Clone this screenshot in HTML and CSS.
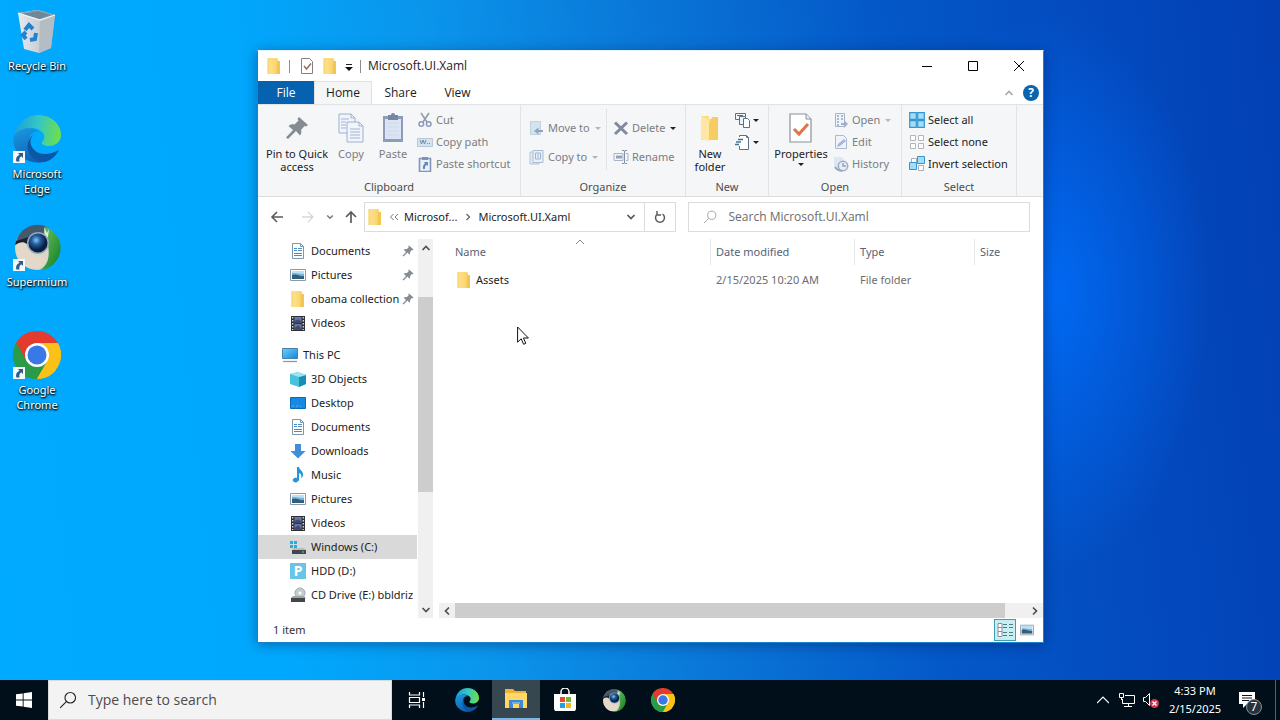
FILE: index.html
```html
<!DOCTYPE html>
<html lang="en">
<head>
<meta charset="utf-8">
<title>Microsoft.UI.Xaml</title>
<link rel="stylesheet" href="styles.css">
</head>
<body>
<svg class="sprite" aria-hidden="true">
  <defs>
    <linearGradient id="gFolder" x1="0" x2="1"><stop offset="0" stop-color="#ffe391"/><stop offset="1" stop-color="#f8cf62"/></linearGradient>
    <linearGradient id="gEdgeTop" x1="0" y1=".4" x2="1" y2=".5"><stop offset="0" stop-color="#1a9fdc"/><stop offset=".5" stop-color="#35c6c4"/><stop offset="1" stop-color="#6fe04a"/></linearGradient>
    <linearGradient id="gEdgeLeft" x1="0" y1="0" x2=".4" y2="1"><stop offset="0" stop-color="#1b9be0"/><stop offset="1" stop-color="#0f62b8"/></linearGradient>
    <radialGradient id="gOrb" cx=".4" cy=".35"><stop offset="0" stop-color="#8cc6ec"/><stop offset=".45" stop-color="#2560a4"/><stop offset="1" stop-color="#0a1f44"/></radialGradient>
    <linearGradient id="gGreen" x1="0" y1="0" x2="1" y2="1"><stop offset="0" stop-color="#6cc860"/><stop offset="1" stop-color="#127a24"/></linearGradient>
    <linearGradient id="gBin" x1="0" x2="1"><stop offset="0" stop-color="#e6ebef"/><stop offset=".55" stop-color="#c9d0d6"/><stop offset="1" stop-color="#a9b3bc"/></linearGradient>
    <linearGradient id="gScreen" x1="0" y1="0" x2="1" y2="1"><stop offset="0" stop-color="#6fd0fb"/><stop offset="1" stop-color="#1485dc"/></linearGradient>
  </defs>
  <symbol id="folder" viewBox="0 0 16 16"><path d="M1.500 0h9.500l1 1v2h2v13H1.500z" fill="url(#gFolder)"/><path d="M11 3h3v13h-3.500z" fill="#f3c551"/><path d="M1.500 0h2v16h-2z" fill="#f9d878"/></symbol>
  <symbol id="edge" viewBox="0 0 48 48">
    <path d="M1 22C3 9 13 0 25 0c13 0 23 9 23 20 0 7-6 11-12 11-5 0-8-2-7-4 3-3 3-7 0-10C21 10 8 12 1 22z" fill="url(#gEdgeTop)"/>
    <path d="M1 21c6-9 19-10 25-4-6-2-11 4-10 12 1 9 9 16 18 17-7 3-18 2-25-4C2 36-1 29 1 21z" fill="url(#gEdgeLeft)"/>
    <path d="M20 20c-6 6-1 19 12 19 5 0 9-2 12-3 2-1 2 0 1 1-3 5-8 9-14 10-11 0-18-10-16-19 1-4 3-7 5-8z" fill="#0c57a5"/>
  </symbol>
  <symbol id="chrome" viewBox="0 0 48 48">
    <path d="M24 24 3.200 12A24 24 0 0 1 44.800 12z" fill="#e33b2e"/>
    <path d="M24 24 44.800 12A24 24 0 0 1 24 48z" fill="#fbc116"/>
    <path d="M24 24v24A24 24 0 0 1 3.200 12z" fill="#2a9c48"/>
    <path d="M24 12h20.800c2 4 3.200 8 3.200 12L34.400 30z" fill="#fbc116"/>
    <path d="M34.400 30 24 48c-5 0-9-1-12-3l9-12z" fill="#2a9c48"/>
    <path d="M34.400 30 24 48c8 0 15-4 19-9z" fill="#fbc116"/>
    <path d="M13.600 30 3.200 12C6 7 10 4 14 2l6 12z" fill="#e33b2e"/>
    <path d="M3.200 12L13.600 30l6 3 1 8-10 3C2 38-3 24 3.200 12z" fill="#2a9c48"/>
    <circle cx="24" cy="24" r="12" fill="#fff"/><circle cx="24" cy="24" r="9.500" fill="#3b78e7"/>
  </symbol>
  <symbol id="supermium" viewBox="0 0 48 48">
    <circle cx="24" cy="25" r="22" fill="#dcd6c6"/>
    <path d="M3 19A22 22 0 0 1 34 4l-4 9-15 4z" fill="#46586c"/>
    <path d="M32 4a22 22 0 0 1-5 43c8-5 10-13 8-25l-5-8z" fill="url(#gGreen)"/>
    <path d="M3 18l16-5-5 8c-4-3-7-2-12 1z" fill="#162430"/>
    <path d="M4 21c6-2 9 0 12 6 5 8 12 6 17 10-3 6-7 9-13 9C11 45 2 36 4 21z" fill="#e3d8c9"/>
    <path d="M31 4l3 6 2-4-1 8-3 2z" fill="#e8e4e4"/>
    <circle cx="25" cy="20" r="11" fill="#8fa9bd"/><circle cx="25" cy="20" r="9.500" fill="url(#gOrb)"/>
  </symbol>
  <symbol id="bin" viewBox="0 0 48 48">
    <path d="M5 6 25 3l17 5-4 33-12 5-15-4z" fill="url(#gBin)"/>
    <path d="M5 6 25 3l17 5-15 5z" fill="#8ba4b6"/><path d="M9 7l16-3 13 4-12 4z" fill="#6f8798"/>
    <path d="M27 13 42 8l-4 33-12 5z" fill="#b4bcc4"/>
    <path d="M5 6l22 7 15-5" fill="none" stroke="#f2f6f8" stroke-width="1.300"/>
    <g fill="none" stroke="#2381cf" stroke-width="4"><path d="M12 23l4-5 4 4"/><path d="M23 26l-1 6-5 1"/><path d="M13 32l-3-4 3-3"/></g>
  </symbol>
  <symbol id="shortcut" viewBox="0 0 12 12"><path fill="#f4f8fb" d="M0 0h12v12H0z"/><path d="M5 2h5v5L8.300 5.300C6.500 6.500 6 8 6.500 10.500H3.300C2.500 7.500 3.500 5 6.500 3.700z" fill="#2e5c8a"/></symbol>
  <symbol id="checkpage" viewBox="0 0 26 32"><path d="M2 2h16l5 5v23H2z" fill="#fff" stroke="#8a929c" stroke-width="1.200"/><path d="M18 2v5h5" fill="#eee" stroke="#8a929c"/><path d="M6 17l5 5 9-10" fill="none" stroke="#e27248" stroke-width="3"/></symbol>
  <symbol id="pagetick" viewBox="0 0 16 16"><path d="M2.500.5h8l3 3v12h-11z" fill="#fff" stroke="#8b7b83"/><path d="M5 8l2.500 3L12 5.500" fill="none" stroke="#a2685f" stroke-width="1.500"/></symbol>
  <symbol id="pin" viewBox="0 0 24 24"><path d="M14 1l9 8-2 1.500-1.500-.5-3.500 4c1 2 0 4-1 5.500l-4-4.500L3 23l-2-1.500 7-7.500L3.500 10c2-2 4-2 6-1.500l4-4L12.500 3z" fill="#858b92"/></symbol>
  <symbol id="copy" viewBox="0 0 28 32"><g fill="#f1f5fb" stroke="#9fb0cb"><path d="M2 2h12l4 4v15H2z"/><path d="M10 10h12l4 4v16H10z"/></g><path d="M14 2v4h4M22 10v4h4" fill="none" stroke="#9fb0cb"/><path d="M4 7h8M4 10h5M4 13h5M4 16h5M13 17h10M13 20h10M13 23h10M13 26h10" stroke="#9fb3d4"/></symbol>
  <symbol id="paste" viewBox="0 0 24 32"><path d="M2 4h20v26H2z" fill="#8d9cb9"/><path d="M4 7h16v20H4z" fill="#dbe4f3"/><path d="M7 3h3a2 2 0 0 1 4 0h3v5H7z" fill="#7686a5"/><path d="M6 11h12M6 15h12M6 19h12M6 23h12" stroke="#cfdaec"/></symbol>
  <symbol id="cut" viewBox="0 0 16 16"><path d="M4 1l6 9M12 1L6 10" stroke="#929dab" stroke-width="1.600" fill="none"/><circle cx="4.300" cy="12" r="2.300" fill="none" stroke="#8d99ba" stroke-width="1.500"/><circle cx="11.700" cy="12" r="2.300" fill="none" stroke="#8d99ba" stroke-width="1.500"/></symbol>
  <symbol id="path" viewBox="0 0 16 16"><path d="M.5 4.500h15v8H.5z" fill="#d3e3f0" stroke="#b3cadb"/><path d="M3 6l1.500 4L6 6l1.500 4L9 6M10 9.500h1M12 9.500h1" fill="none" stroke="#748ba0"/></symbol>
  <symbol id="pasteshort" viewBox="0 0 16 16"><path d="M2.500 2.500h11v13h-11z" fill="#e9f0f9" stroke="#8296bb" stroke-width="1.600"/><path d="M5 1h6v3H5z" fill="#8292b0"/><path d="M7 6h4v4L9.500 8.700C8 10 8 11 8 13H6c-.5-3 .5-4.500 2-5.500z" fill="#6685bb"/></symbol>
  <symbol id="move" viewBox="0 0 16 16"><path d="M1.500 1.500h10v13h-10z" fill="#d5e3ef" stroke="#c0d2e2"/><path d="M14 10H9.500V7.500L5 11l4.500 3.500V12H14z" fill="#8fa6be"/></symbol>
  <symbol id="copyto" viewBox="0 0 16 16"><path d="M1 3h9v12H1z" fill="#e1eaf3" stroke="#b4c5d8"/><path d="M4 1.500h10v12H4z" fill="#e9f0f7" stroke="#a8bcd4"/><path d="M6.500 4h5v6h-5zM8 6h2M8 8h2" fill="none" stroke="#9eb2cc"/></symbol>
  <symbol id="delete" viewBox="0 0 16 16"><path d="M2 2.500l12 11.500M14 2.500L2 14" stroke="#8089a0" stroke-width="3"/></symbol>
  <symbol id="rename" viewBox="0 0 16 16"><path d="M1 4.500h9v7H1zM13 4.500h2v7h-2" fill="none" stroke="#a9b4c6"/><path d="M3 8h6" stroke="#92a1bb" stroke-width="3"/><path d="M9 1.500h2l.5 1 .5-1h2M11.500 2v12M9 14.500h2l.5-1 .5 1h2" fill="none" stroke="#8290a7"/></symbol>
  <symbol id="newitem" viewBox="0 0 16 16"><path d="M.5 1.500h10v3H9M.5 1.500v6H4M2 3.500h6" fill="none" stroke="#577188"/><path d="M4.500 4.500h6v8h-6z" fill="#eef3f7" stroke="#577188"/><path d="M8.500 6.500h4l2 2v7h-6z" fill="#fff" stroke="#577188"/></symbol>
  <symbol id="easy" viewBox="0 0 16 16"><path d="M4.500 12v3.500h9V3.500l-2-2h-7V3" fill="#fff" stroke="#577188"/><path d="M11.500 1.500v2h2" fill="none" stroke="#577188"/><path d="M3 5.500h5M1 8h5M0 10.500h4" stroke="#41749b" stroke-width="1.300"/></symbol>
  <symbol id="open" viewBox="0 0 16 16"><path d="M2.500 1.500h9v13h-9z" fill="#eff4fa" stroke="#a4b2cc"/><path d="M4 4h2M8 4h2M4 7h2M8 7h2M4 10h2M4 13h2" stroke="#95a5c3" stroke-width="1.500"/><path d="M8 11h3V8l4 4-4 4v-3H8z" fill="#a0aecb"/></symbol>
  <symbol id="edit" viewBox="0 0 16 16"><path d="M2.500 1.500h8l3 3v10h-11z" fill="#eef2fa" stroke="#abb8cf"/><path d="M4 13l1-3 6-5 2 2-6 5z" fill="#aab6d4"/></symbol>
  <symbol id="history" viewBox="0 0 16 16"><path d="M1 1h8l2 3v9H1z" fill="#dde7f2"/><circle cx="10" cy="10" r="4.700" fill="#e8edf5" stroke="#9dabc5" stroke-width="1.500"/><path d="M10 7v3h3M2 11c2 3 4 4 7 4" fill="none" stroke="#93a1bb" stroke-width="1.500"/></symbol>
  <symbol id="selall" viewBox="0 0 16 16"><path d="M.7.7h6.600v6.600H.7zM8.700.7h6.600v6.600H8.700zM.7 8.700h6.600v6.600H.7zM8.700 8.700h6.600v6.600H8.700z" fill="#a5dcf8" stroke="#3296cf" stroke-width="1.200"/></symbol>
  <symbol id="selnone" viewBox="0 0 16 16"><path d="M1.500 1.500h5v5h-5zM9.500 1.500h5v5h-5zM1.500 9.500h5v5h-5zM9.500 9.500h5v5h-5z" fill="#fff" stroke="#b5b5b5"/></symbol>
  <symbol id="selinv" viewBox="0 0 16 16"><path d="M2.500 2.500h5v5h-5zM9.500 9.500h5v5h-5z" fill="#fff" stroke="#a8b0b7"/><path d="M8.500.5h7v7h-7zM.5 6.500h7v7h-7z" fill="#a5dcf8" stroke="#3296cf"/></symbol>
  <symbol id="doc" viewBox="0 0 16 16"><path d="M2.500.5h8l3 3v12h-11z" fill="#fff" stroke="#7b97ad"/><path d="M4 5.500h3M4 7.500h3M8 5.500h4M8 7.500h4M4 10.500h8M4 12.500h8" stroke="#4a8cc4"/><path d="M10.500.5v3h3" fill="none" stroke="#7b97ad"/></symbol>
  <symbol id="pic" viewBox="0 0 16 16"><path d="M.5 2.500h15v11H.5z" fill="#fff" stroke="#8b9aa6"/><path d="M2 4h12v8H2z" fill="#6cb2dd"/><path d="M2 4h12v3L2 6z" fill="#bfe0f2"/><path d="M2 8c5-2 7 2 12 1v3H2z" fill="#355f78"/></symbol>
  <symbol id="video" viewBox="0 0 16 16"><path d="M1 1h14v15H1z" fill="#2f3136"/><path d="M4.500 2h7v6h-7zM4.500 9h7v6h-7z" fill="#6678b4"/><path d="M4.500 6l4-2 3 3v1h-7zM4.500 13l4-3 3 4v1h-7z" fill="#454a68"/><path d="M2.700 2v13M13.300 2v13" stroke="#ddd" stroke-width="1.300" stroke-dasharray="1.500 1.500"/></symbol>
  <symbol id="pc" viewBox="0 0 16 16"><path d="M.5 1.500h15v10H.5z" fill="url(#gScreen)" stroke="#4683aa"/><path d="M1 14.500h14" stroke="#8a9ba5" stroke-width="1.300"/></symbol>
  <symbol id="cube" viewBox="0 0 16 16"><path d="M0 3l8-2 8 3v9l-7 3-9-3z" fill="#48c1dc"/><path d="M9 6l7-2v9l-7 3z" fill="#178fb2"/><path d="M0 3l8-2 8 3-7 2z" fill="#9de4f0"/></symbol>
  <symbol id="desk" viewBox="0 0 16 16"><path d="M.5 2.500h15v11H.5z" fill="#1689e2" stroke="#0b6bbb"/><path d="M2 12l2-2M6 12l2-2M10 12l1-1" stroke="#4fb4f6"/></symbol>
  <symbol id="down" viewBox="0 0 16 16"><path d="M5 1h6v7h4.500L8 15.500.5 8H5z" fill="#3e8fda"/></symbol>
  <symbol id="music" viewBox="0 0 16 16"><path d="M7 0h2c0 3 5 4 4 9-1 1-1 2-2 2 1-3 0-4-2-5v7c-1 3-5 3-6 1s2-4 4-3z" fill="#2395da"/></symbol>
  <symbol id="winc" viewBox="0 0 16 16"><path d="M0 2h3v3H0zM4 2h3v3H4zM0 6h3v3H0zM4 6h3v3H4z" fill="#29abe2"/><path d="M4 9h10l2 2H2z" fill="#b6bcc0"/><path d="M2 11h14v4H2z" fill="#41484d"/><path d="M12 13h2" stroke="#62d486"/></symbol>
  <symbol id="cd" viewBox="0 0 16 16"><circle cx="10" cy="6" r="5" fill="#c6cbcd" stroke="#a3aaad"/><circle cx="10" cy="6" r="1.500" fill="#fff"/><path d="M3 9h11l2 2H1z" fill="#a0a6aa"/><path d="M1 11h14v4H1z" fill="#42474b"/></symbol>
  <symbol id="lens" viewBox="0 0 16 16"><circle cx="10" cy="6" r="4.700" fill="none" stroke="currentColor"/><path d="M6.500 9.500L1 15" fill="none" stroke="currentColor"/></symbol>
  <symbol id="chev" viewBox="0 0 10 10"><path d="M1.500 3L5 6.500 8.500 3" fill="none" stroke="currentColor" stroke-width="1.700"/></symbol>
</svg>

<main class="desktop">
  <div class="shortcuts">
    <a class="desk-icon" href="#"><svg class="i48"><use href="#bin"/></svg><span>Recycle Bin</span></a>
    <a class="desk-icon" href="#"><svg class="i48"><use href="#edge"/></svg><svg class="badge"><use href="#shortcut"/></svg><span>Microsoft Edge</span></a>
    <a class="desk-icon" href="#"><svg class="i48"><use href="#supermium"/></svg><svg class="badge"><use href="#shortcut"/></svg><span>Supermium</span></a>
    <a class="desk-icon" href="#"><svg class="i48"><use href="#chrome"/></svg><svg class="badge"><use href="#shortcut"/></svg><span>Google Chrome</span></a>
  </div>

  <section class="window" aria-label="Microsoft.UI.Xaml">
    <header class="titlebar">
      <svg class="i16"><use href="#folder"/></svg><i class="bar"></i>
      <button aria-label="Properties"><svg class="i16"><use href="#pagetick"/></svg></button>
      <button aria-label="New folder"><svg class="i16"><use href="#folder"/></svg></button>
      <button aria-label="Customize toolbar"><svg class="qat" viewBox="0 0 8 8"><path d="M1 1.500h6" stroke="#222"/><path d="M0 4h8L4 8z" fill="#111"/></svg></button>
      <i class="bar"></i>
      <h1>Microsoft.UI.Xaml</h1>
      <div class="caption">
        <button aria-label="Minimize"><svg viewBox="0 0 10 10"><path d="M0 5.500h10" stroke="#000"/></svg></button>
        <button aria-label="Maximize"><svg viewBox="0 0 10 10"><path d="M.5.500h9v9h-9z" fill="none" stroke="#000"/></svg></button>
        <button aria-label="Close"><svg viewBox="0 0 10 10"><path d="M0 0l10 10M10 0L0 10" stroke="#000"/></svg></button>
      </div>
    </header>

    <nav class="tabs">
      <button class="tab file">File</button><button class="tab active">Home</button><button class="tab">Share</button><button class="tab">View</button>
      <button class="collapse" aria-label="Collapse ribbon"><svg class="i10 flip"><use href="#chev"/></svg></button>
      <button class="help" aria-label="Help">?</button>
    </nav>

    <div class="ribbon">
      <section class="group clipboard">
        <div class="tools">
          <button class="big pinbtn"><svg class="i24"><use href="#pin"/></svg><span>Pin to Quick access</span></button>
          <button class="big off"><svg class="i32"><use href="#copy"/></svg><span>Copy</span></button>
          <button class="big off"><svg class="i32"><use href="#paste"/></svg><span>Paste</span></button>
          <div class="stack off">
            <button><svg class="i16"><use href="#cut"/></svg>Cut</button>
            <button><svg class="i16"><use href="#path"/></svg>Copy path</button>
            <button><svg class="i16"><use href="#pasteshort"/></svg>Paste shortcut</button>
          </div>
        </div>
        <h2>Clipboard</h2>
      </section>
      <section class="group organize">
        <div class="tools">
          <div class="stack two off">
            <button><svg class="i16"><use href="#move"/></svg>Move to<i class="caret"></i></button>
            <button><svg class="i16"><use href="#copyto"/></svg>Copy to<i class="caret"></i></button>
          </div>
          <div class="stack two off ruled">
            <button><svg class="i16"><use href="#delete"/></svg>Delete<i class="caret dark"></i></button>
            <button><svg class="i16"><use href="#rename"/></svg>Rename</button>
          </div>
        </div>
        <h2>Organize</h2>
      </section>
      <section class="group new">
        <div class="tools">
          <button class="big"><svg class="i32" viewBox="0 0 32 32"><path d="M7 4h8v3h9v21H7z" fill="#fbdc83"/><path d="M7 4l8 4v21l-8-2z" fill="#ffe7a3"/><path d="M15 12l3-7h6v23h-9z" fill="#f7cc60"/></svg><span>New folder</span></button>
          <div class="stack">
            <button aria-label="New item"><svg class="i16"><use href="#newitem"/></svg><i class="caret dark"></i></button>
            <button aria-label="Easy access"><svg class="i16"><use href="#easy"/></svg><i class="caret dark"></i></button>
          </div>
        </div>
        <h2>New</h2>
      </section>
      <section class="group openg">
        <div class="tools">
          <button class="big"><svg class="i32"><use href="#checkpage"/></svg><span>Properties</span><i class="caret dark"></i></button>
          <div class="stack off">
            <button><svg class="i16"><use href="#open"/></svg>Open<i class="caret"></i></button>
            <button><svg class="i16"><use href="#edit"/></svg>Edit</button>
            <button><svg class="i16"><use href="#history"/></svg>History</button>
          </div>
        </div>
        <h2>Open</h2>
      </section>
      <section class="group select">
        <div class="tools">
          <div class="stack">
            <button><svg class="i16"><use href="#selall"/></svg>Select all</button>
            <button><svg class="i16"><use href="#selnone"/></svg>Select none</button>
            <button><svg class="i16"><use href="#selinv"/></svg>Invert selection</button>
          </div>
        </div>
        <h2>Select</h2>
      </section>
    </div>

    <div class="address">
      <button aria-label="Back"><svg class="i14" viewBox="0 0 14 14"><path d="M7 2L2 7l5 5M2 7h11" fill="none" stroke="#5c5c5c" stroke-width="1.600"/></svg></button>
      <button class="fwd" aria-label="Forward"><svg class="i14" viewBox="0 0 14 14"><path d="M8 2l5 5-5 5M13 7H2" fill="none" stroke="#d6d6d6" stroke-width="1.300"/></svg></button>
      <button class="recent" aria-label="Recent locations"><svg class="i8"><use href="#chev"/></svg></button>
      <button class="up" aria-label="Up"><svg class="i14" viewBox="0 0 14 14"><path d="M2 7l5-5 5 5M7 2v11" fill="none" stroke="#5c5c5c" stroke-width="1.700"/></svg></button>
      <div class="crumbs">
        <svg class="i16"><use href="#folder"/></svg>
        <svg class="i10" viewBox="0 0 10 10"><path d="M4.500 2L1.500 5l3 3M9 2L6 5l3 3" fill="none" stroke="#777"/></svg>
        <button>Microsof...</button>
        <svg class="i10" viewBox="0 0 10 10"><path d="M3.500 2l3 3-3 3" fill="none" stroke="#666" stroke-width="1.300"/></svg>
        <button>Microsoft.UI.Xaml</button>
        <button class="history" aria-label="Previous locations"><svg class="i10"><use href="#chev"/></svg></button>
      </div>
      <button class="refresh" aria-label="Refresh"><svg class="i14" viewBox="0 0 14 14"><path d="M4.500 4A4.500 4.500 0 1 0 9.500 4M4 1v4h4" fill="none" stroke="#5c5c5c" stroke-width="1.500"/></svg></button>
      <label class="search"><svg class="i14"><use href="#lens"/></svg><input type="text" placeholder="Search Microsoft.UI.Xaml" aria-label="Search Microsoft.UI.Xaml"></label>
    </div>

    <div class="content">
      <nav class="tree">
        <a href="#"><svg class="i16"><use href="#doc"/></svg><span>Documents</span><svg class="i12"><use href="#pin"/></svg></a>
        <a href="#"><svg class="i16"><use href="#pic"/></svg><span>Pictures</span><svg class="i12"><use href="#pin"/></svg></a>
        <a href="#"><svg class="i16"><use href="#folder"/></svg><span>obama collection</span><svg class="i12"><use href="#pin"/></svg></a>
        <a href="#"><svg class="i16"><use href="#video"/></svg><span>Videos</span></a>
        <a href="#" class="root"><svg class="i16"><use href="#pc"/></svg><span>This PC</span></a>
        <a href="#"><svg class="i16"><use href="#cube"/></svg><span>3D Objects</span></a>
        <a href="#"><svg class="i16"><use href="#desk"/></svg><span>Desktop</span></a>
        <a href="#"><svg class="i16"><use href="#doc"/></svg><span>Documents</span></a>
        <a href="#"><svg class="i16"><use href="#down"/></svg><span>Downloads</span></a>
        <a href="#"><svg class="i16"><use href="#music"/></svg><span>Music</span></a>
        <a href="#"><svg class="i16"><use href="#pic"/></svg><span>Pictures</span></a>
        <a href="#"><svg class="i16"><use href="#video"/></svg><span>Videos</span></a>
        <a href="#" class="current"><svg class="i16"><use href="#winc"/></svg><span>Windows (C:)</span></a>
        <a href="#"><b class="ptile">P</b><span>HDD (D:)</span></a>
        <a href="#"><svg class="i16"><use href="#cd"/></svg><span>CD Drive (E:) bbldriz</span></a>
      </nav>
      <div class="vscroll"><svg class="i10 flip"><use href="#chev"/></svg><div class="track"><div class="thumb"></div></div><svg class="i10"><use href="#chev"/></svg></div>
      <div class="files">
        <table>
          <colgroup><col class="c-name"><col class="c-date"><col class="c-type"><col></colgroup>
          <thead><tr><th>Name<svg class="sort i10" viewBox="0 0 10 10"><path d="M1 7l4-4 4 4" fill="none" stroke="#888"/></svg></th><th>Date modified</th><th>Type</th><th>Size</th></tr></thead>
          <tbody><tr><td><span class="fname"><svg class="i16"><use href="#folder"/></svg>Assets</span></td><td>2/15/2025 10:20 AM</td><td>File folder</td><td></td></tr></tbody>
        </table>
        <div class="hscroll"><svg class="i10 left"><use href="#chev"/></svg><div class="track"><div class="thumb"></div></div><svg class="i10 right"><use href="#chev"/></svg></div>
      </div>
    </div>

    <footer class="status">
      <span>1 item</span>
      <button class="view on" aria-label="Details view"><svg class="i16" viewBox="0 0 16 16"><path d="M1 1.500h4v13H1zM1 5.500h4M1 9.500h4" fill="#fff" stroke="#8f8ba0"/><path d="M6 2.500h4M12 2.500h4M6 5.500h4M12 5.500h4M6 10.500h4M12 10.500h4M6 13.500h4M12 13.500h4" stroke="#487e89"/></svg></button>
      <button class="view" aria-label="Large icons view"><svg class="i14"><use href="#pic"/></svg></button>
    </footer>
  </section>

  <svg class="cursor" viewBox="0 0 12 19"><path d="M.6 1v15.200l3.600-3.400 2.400 5.500 2.200-1-2.400-5.300h5z" fill="#fff" stroke="#111"/></svg>
</main>

<footer class="taskbar">
  <button class="start" aria-label="Start"><svg class="i16" viewBox="0 0 16 16"><path d="M0 2.300L6.700 1.400v6.100H0zM7.600 1.200L16 0v7.500H7.600zM0 8.400h6.700v6.200L0 13.700zM7.600 8.400H16V16l-8.400-1.200z" fill="#fff"/></svg></button>
  <label class="tasksearch"><svg class="i18"><use href="#lens"/></svg><input type="text" placeholder="Type here to search" aria-label="Type here to search"></label>
  <div class="apps">
    <button aria-label="Task view"><svg class="i18" viewBox="0 0 18 18"><path d="M1.500 1v3h10V1M1.500 17v-3h10v3M1.500 6.500h10v5h-10zM15.500 1v5M15.500 11v6" fill="none" stroke="#fff" stroke-width="1.200"/><path d="M14 7h3v3h-3z" fill="#fff"/></svg></button>
    <button aria-label="Microsoft Edge"><svg class="i24"><use href="#edge"/></svg></button>
    <button class="running" aria-label="File Explorer"><svg class="i24" viewBox="0 0 24 24"><path d="M1 2h8l2 2h11v17H1z" fill="#eeb23a"/><path d="M1 6h22v15H1z" fill="#ffd868"/><path d="M5 13h14v8h-4v-4H9v4H5z" fill="#3b8ad6"/><path d="M8 16h8" stroke="#aed6f2"/></svg></button>
    <button aria-label="Microsoft Store"><svg class="i24" viewBox="0 0 24 24"><path d="M8 6V4a4 4 0 0 1 8 0v2" fill="none" stroke="#fff" stroke-width="1.500"/><path d="M1 6h22v15l-1 2H2l-1-2z" fill="#fff"/><path d="M7 9h5v5H7z" fill="#e54d2a"/><path d="M13 9h5v5h-5z" fill="#74b62c"/><path d="M7 15h5v5H7z" fill="#2a9be0"/><path d="M13 15h5v5h-5z" fill="#f5b51b"/></svg></button>
    <button aria-label="Supermium"><svg class="i24"><use href="#supermium"/></svg></button>
    <button aria-label="Google Chrome"><svg class="i24"><use href="#chrome"/></svg></button>
  </div>
  <div class="tray">
    <button aria-label="Hidden icons"><svg class="i12" viewBox="0 0 12 12"><path d="M0 9l6-6 6 6" fill="none" stroke="#fff" stroke-width="1.200"/></svg></button>
    <button aria-label="Network"><svg class="i16" viewBox="0 0 16 16"><path d="M6 3.500h9.500v8H3.500V7M5 14.500h8M9.500 12v2M.5 1.500h4v4h-4zM2.500 5v3" fill="none" stroke="#fff"/></svg></button>
    <button aria-label="Volume muted"><svg class="i16" viewBox="0 0 16 16"><path d="M.5 5.500h2l4-4v12l-4-4h-2z" fill="none" stroke="#fff"/><circle cx="11.500" cy="11.500" r="4.500" fill="#d8324a"/><path d="M9.500 9.500l4 4M13.500 9.500l-4 4" stroke="#fff" stroke-width="1.400"/></svg></button>
    <button class="clock"><span>4:33 PM</span><span>2/15/2025</span></button>
    <button class="notes" aria-label="Notifications"><svg class="i16" viewBox="0 0 16 16"><path d="M0 0h16v12H8l-4 4v-4H0z" fill="#fff"/><path d="M3 3.500h10M3 6h10M3 8.500h7" stroke="#0a141c"/></svg><span class="count">7</span></button>
    <button class="peek" aria-label="Show desktop"></button>
  </div>
</footer>
</body>
</html>
```
FILE: styles.css
```css
* { box-sizing: border-box; }
body {
  margin: 0;
  height: 100vh;
  display: flex;
  flex-direction: column;
  overflow: hidden;
  font: 11px/16px "Noto Sans", "Open Sans", sans-serif;
  color: #1c1c1c;
}
button, input { font: inherit; color: inherit; background: none; border: 0; padding: 0; margin: 0; outline: 0; }
a { color: inherit; text-decoration: none; }
h1, h2 { font-size: inherit; font-weight: 400; margin: 0; }
svg { display: block; flex: none; }
.sprite { position: absolute; width: 0; height: 0; }
.i8 { width: 8px; height: 8px; }
.i10 { width: 10px; height: 10px; }
.i12 { width: 12px; height: 12px; }
.i14 { width: 14px; height: 14px; }
.i16 { width: 16px; height: 16px; }
.i18 { width: 18px; height: 18px; }
.i24 { width: 24px; height: 24px; }
.i32 { width: 32px; height: 32px; }
.i48 { width: 48px; height: 48px; }
.flip { transform: rotate(180deg); }
.left { transform: rotate(90deg); }
.right { transform: rotate(-90deg); }

.desktop {
  flex: 1;
  min-height: 0;
  position: relative;
  background:
    radial-gradient(ellipse 160px 280px at 82% 43%, rgba(0, 112, 255, .8), rgba(0, 90, 230, 0)),
    linear-gradient(84deg, #00aaff 0%, #00a8fd 22%, #0a96ec 36%, #0a78d8 52%, #0458c8 70%, #034abe 86%, #0240b4 100%);
}
.shortcuts { display: flex; flex-direction: column; width: 74px; padding-top: 7px; line-height: 15px; }
.desk-icon {
  position: relative;
  height: 108px;
  padding: 0 4px;
  display: flex;
  flex-direction: column;
  align-items: center;
  gap: 3px;
  color: #fff;
  text-align: center;
  text-shadow: 0 1px 2px #000, 1px 1px 2px #000;
}
.desk-icon span { width: min-content; }
.desk-icon:first-child span { width: auto; }
.badge { position: absolute; left: 13px; top: 36px; width: 12px; height: 12px; }

.window {
  position: absolute;
  top: 50px;
  right: 236px;
  bottom: 37px;
  left: 257px;
  display: flex;
  flex-direction: column;
  background: #fff;
  border: 1px solid #1583cd;
  border-top-color: #e8f2fb;
  box-shadow: 0 2px 12px rgba(0, 20, 70, .4);
}
.titlebar { display: flex; align-items: center; height: 30px; padding-left: 8px; flex: none; }
.titlebar .bar { width: 1px; height: 13px; background: #8e8e8e; margin: 0 9px 0 7px; }
.titlebar > button { margin-right: 7px; }
.titlebar h1 { font-size: 12px; font-family: "Open Sans", "Noto Sans", sans-serif; }
.qat { width: 8px; height: 8px; margin-top: 2px; }
.titlebar > button + .bar { margin: 0 7px 0 0; }
.caption { margin-left: auto; padding-right: 1px; display: flex; align-self: stretch; }
.caption button { width: 46px; display: grid; place-items: center; }
.caption svg { width: 10px; height: 10px; }

.tabs { display: flex; height: 23px; flex: none; align-items: stretch; font-size: 12px; font-family: "Open Sans", "Noto Sans", sans-serif; }
.tab { width: 57px; border: 1px solid transparent; line-height: 20px; }
.tab.file { background: #0562b0; color: #fff; width: 56px; }
.tab.active { background: #f5f6f7; border-color: #dfe0e1; border-bottom: 0; width: 58px; }
.collapse { margin-left: auto; color: #aaa; width: 22px; display: grid; place-items: center; }
.help { width: 16px; height: 16px; border-radius: 50%; background: #0b64ad; color: #fff; font-weight: 700; align-self: center; margin: 0 4px 0 3px; line-height: 14px; }

.ribbon { display: flex; height: 93px; flex: none; background: #f5f6f7; border-top: 1px solid #e1e2e3; border-bottom: 1px solid #dcddde; }
.group { display: flex; flex-direction: column; border-right: 1px solid #e2e3e4; }
.group h2 { text-align: center; color: #4c4c4c; line-height: 18px; }
.tools { flex: 1; display: flex; padding-top: 4px; }
.clipboard { width: 263px; }
.organize { width: 165px; }
.new { width: 83px; }
.openg { width: 133px; }
.select { width: 115px; }
.big { display: flex; flex-direction: column; align-items: center; justify-content: flex-start; line-height: 13px; padding-top: 3px; width: 42px; gap: 3px; }
.big.pinbtn { width: 66px; margin-left: 6px; }
.pinbtn svg { margin: 4px; }
.stack { display: flex; flex-direction: column; margin-left: 3px; }
.stack button { display: flex; align-items: center; gap: 3px; height: 22px; white-space: nowrap; }
.off { color: #7a7d82; }
.caret { border: 3px solid transparent; border-top-color: #b3b6ba; border-bottom: 0; margin-left: 2px; }
.caret.dark { border-top-color: #222; }
.big .caret { margin: 0; }
.two { gap: 7px; padding-top: 8px; margin-left: 8px; }
.ruled { border-left: 1px solid #e2e3e4; padding-left: 6px; margin-left: auto; width: 79px; margin-bottom: 8px; }
.new .big { width: 48px; }
.new .stack { margin-left: 1px; }
.new .stack button { gap: 0; }
.openg .big { width: 58px; margin-left: 3px; }
.select .stack { margin-left: 7px; }

.address { display: flex; align-items: center; height: 42px; flex: none; padding: 0 13px 2px 12px; font-size: 11px; }
.address > button { display: grid; place-items: center; }
.fwd { margin-left: 16px; }
.recent { margin-left: 12px; color: #777; }
.up { margin-left: 10px; }
.crumbs { flex: 1 1 281px; height: 30px; margin-left: 6px; border: 1px solid #dcdcdc; display: flex; align-items: center; gap: 6px; padding-left: 2px; white-space: nowrap; }
.crumbs .i10 { margin-right: -1px; }
.crumbs .history { margin-left: auto; padding-right: 9px; color: #555; }
.address .refresh { width: 31px; height: 30px; border: 1px solid #dcdcdc; border-left: 0; }
.search { flex: 1 1 343px; height: 30px; margin-left: 12px; border: 1px solid #dcdcdc; display: flex; align-items: center; gap: 12px; padding-left: 14px; color: #9a9a9a; }
.search input { flex: 1; min-width: 0; font-size: 12px; font-family: "Open Sans", "Noto Sans", sans-serif; }
.search input::placeholder { color: #6c6c6c; opacity: 1; }

.content { flex: 1; min-height: 0; display: flex; }
.tree { width: 160px; padding-right: 1px; overflow: hidden; flex: none; }
.tree a { display: flex; align-items: center; height: 24px; padding-left: 32px; gap: 5px; white-space: nowrap; }
.tree span { flex: 1; min-width: 0; overflow: hidden; }
.tree .i12 { margin: 0 3px 0 -5px; }
.tree a.root { margin-top: 8px; padding-left: 24px; }
.tree .current { background: #d9d9d9; }
.ptile { width: 16px; height: 16px; background: #6bc3e8; color: #fff; line-height: 16px; text-align: center; font-size: 14px; flex: none; }
.vscroll { width: 15px; flex: none; background: #f0f0f0; display: flex; flex-direction: column; align-items: center; justify-content: space-between; padding: 4px 0 3px; color: #505050; }
.vscroll .track { flex: 1; width: 100%; padding: 44px 0 113px; display: flex; }
.thumb { flex: 1; background: #cdcdcd; }
.files { flex: 1; min-width: 0; display: flex; flex-direction: column; justify-content: space-between; padding-left: 6px; }
table { width: 100%; table-layout: fixed; border-collapse: separate; border-spacing: 0; }
.c-name { width: 271px; }
.c-date { width: 144px; }
.c-type { width: 120px; }
th { position: relative; height: 26px; text-align: left; font-weight: 400; color: #5a6275; padding: 0 0 0 5px; border-left: 1px solid #e8e8e8; }
th:first-child { border: 0; padding-left: 16px; }
td { height: 30px; padding: 0 0 0 6px; color: #6d6d6d; }
td:first-child { padding-left: 17px; color: #1c1c1c; }
.fname { display: flex; align-items: center; gap: 4px; }
.sort { position: absolute; top: -2px; left: 50%; }
.hscroll { height: 15px; background: #f0f0f0; display: flex; align-items: center; padding: 0 3px; color: #505050; }
.hscroll .track { flex: 1; align-self: stretch; display: flex; padding: 0 25px 0 3px; }

.status { height: 24px; flex: none; display: flex; align-items: center; padding: 0 5px 0 15px; color: #333; }
.view { width: 22px; height: 22px; display: grid; place-items: center; }
.view.on { margin-left: auto; background: #c8eef2; border: 1px solid #3f9fb0; }
.cursor { position: absolute; left: 517px; top: 326px; width: 12px; height: 19px; }

.taskbar { display: flex; height: 40px; flex: none; background: #000f19; color: #fff; }
.start { width: 48px; display: grid; place-items: center; }
.tasksearch { flex: 0 1 344px; display: flex; align-items: center; gap: 11px; padding-left: 10px; background: #f3f3f3; border: 1px solid #d8dadb; color: #222; }
.tasksearch input { flex: 1; min-width: 0; font: 14px/20px "Open Sans", "Noto Sans", sans-serif; }
.tasksearch input::placeholder { color: #4c4c4c; opacity: 1; }
.apps { display: flex; gap: 1px; }
.apps button { width: 48px; display: grid; place-items: center; }
.apps button:first-child { width: 50px; }
.apps .running { background: #37474f; border-bottom: 2px solid #76b9ed; }
.tray { display: flex; margin-left: auto; }
.tray button { width: 24px; display: grid; place-items: center; }
.tray .clock { width: 64px; display: flex; flex-direction: column; align-items: center; justify-content: center; line-height: 18px; }
.tray .notes { position: relative; width: 48px; justify-items: start; padding-left: 12px; }
.count { position: absolute; left: 19px; top: 19px; width: 16px; height: 16px; border-radius: 50%; border: 1px solid #87929a; background: #27323a; line-height: 14px; text-align: center; font-size: 12px; }
.tray .peek { width: 5px; border-left: 1px solid #56616a; }
```
